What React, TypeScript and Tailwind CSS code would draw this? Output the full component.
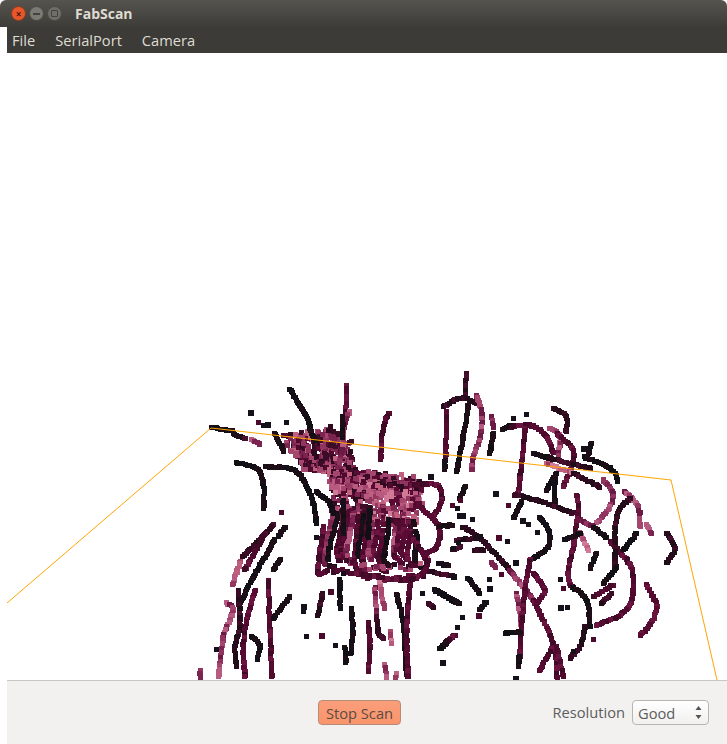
type Pt = [number, number];
type Strand = { c: string; p: number[]; j?: number; drop?: number };

// point cloud colours
const K = ['#14101a', '#1a1016', '#120f14', '#1f0d18'];
const D = ['#2e0a1f', '#3a0c26', '#240c1a', '#1f0d18', '#45102e'];
const M = ['#5a0b33', '#4d0a2c', '#6a1540', '#520c30', '#3f0a26'];
const P = ['#8f3560', '#a5466f', '#7c2450', '#b55a80', '#6a1a45'];
const L = ['#c0607f', '#a94a70', '#d07a98', '#94385f', '#b85a80'];
const X = ['#2e0a1f', '#5a0b33', '#7c2450', '#a5466f', '#4d0a2c', '#c0607f', '#3a0c26', '#8f3560'];
const Y = ['#7c2450', '#a5466f', '#c0607f', '#94385f', '#5a0b33', '#b85a80', '#d07a98'];
const palette: Record<string, string[]> = { k: K, d: D, m: M, p: P, l: L, x: X, y: Y };

// strands read off the left crop (x/3+190, y/3+370)
const left: Strand[] = [
  { c: 'k', p: [300, 58, 325, 100, 350, 140, 365, 190, 375, 210] },
  { c: 'm', p: [470, 48, 468, 100, 462, 150] },
  { c: 'p', p: [478, 125, 462, 170, 458, 225, 448, 275] },
  { c: 'k', p: [458, 140, 458, 200] },
  { c: 'm', p: [598, 130, 582, 160, 575, 210, 572, 268] },
  { c: 'k', p: [140, 278, 200, 295, 220, 340, 222, 415] },
  { c: 'k', p: [225, 292, 300, 295, 340, 330, 370, 400, 380, 460] },
  { c: 'k', p: [255, 190, 275, 230, 282, 245] },
  { c: 'k', p: [65, 173, 125, 182] },
  { c: 'd', p: [130, 190, 165, 208] },
  { c: 'p', p: [185, 210, 210, 222] },
  { c: 'd', p: [250, 465, 160, 560] },
  { c: 'k', p: [285, 470, 265, 500] },
  { c: 'm', p: [225, 490, 165, 600] },
  { c: 'l', p: [150, 575, 128, 645] },
  { c: 'k', p: [255, 510, 190, 620, 150, 700] },
  { c: 'k', p: [270, 570, 250, 600] },
  { c: 'm', p: [235, 630, 240, 780, 245, 920] },
  { c: 'k', p: [300, 680, 250, 745] },
  { c: 'm', p: [195, 660, 170, 750, 160, 830, 165, 920] },
  { c: 'p', p: [110, 700, 130, 720, 100, 800, 85, 920] },
  { c: 'd', p: [145, 660, 150, 760, 135, 830, 140, 890] },
  { c: 'k', p: [185, 800, 210, 825, 200, 870] },
  { c: 'p', p: [30, 900, 30, 925] },
  { c: 'd', p: [398, 670, 385, 735] },
  { c: 'k', p: [450, 630, 450, 715] },
  { c: 'k', p: [485, 715, 488, 790, 482, 850] },
  { c: 'k', p: [465, 830, 468, 880] },
  { c: 'm', p: [535, 755, 540, 830, 535, 905] },
  { c: 'p', p: [555, 650, 560, 730] },
  { c: 'd', p: [560, 740, 565, 790, 580, 805] },
  { c: 'l', p: [570, 640, 582, 715] },
  { c: 'l', p: [600, 785, 605, 820] },
  { c: 'k', p: [620, 675, 640, 760, 650, 920] },
  { c: 'm', p: [660, 640, 650, 780, 655, 920] },
  { c: 'k', p: [735, 660, 810, 700] },
  { c: 'd', p: [715, 700, 730, 712] },
  { c: 'm', p: [795, 795, 770, 820] },
  { c: 'k', p: [770, 820, 755, 835] },
  { c: 'p', p: [585, 885, 590, 925] },
  { c: 'l', p: [618, 910, 618, 925] },
  { c: 'm', p: [400, 470, 388, 560, 385, 610, 412, 602] },
  { c: 'k', p: [460, 390, 460, 490] },
  { c: 'k', p: [540, 420, 535, 500] },
  { c: 'k', p: [380, 365, 420, 400, 430, 430] },
  { c: 'm', p: [610, 450, 680, 520, 710, 590, 650, 630, 500, 610] },
  { c: 'm', p: [665, 345, 740, 345, 755, 390, 730, 440] },
  { c: 'm', p: [680, 400, 745, 470, 740, 530, 700, 555] },
  { c: 'k', p: [745, 580, 775, 585] },
  { c: 'd', p: [720, 605, 795, 620] },
];

// right crop (x/3+440, y/3+370)
const right: Strand[] = [
  { c: 'd', p: [78, 12, 75, 80] },
  { c: 'd', p: [10, 110, 40, 92, 70, 85, 110, 100] },
  { c: 'p', p: [110, 75, 125, 130, 120, 200, 100, 260, 95, 300] },
  { c: 'm', p: [20, 125, 18, 260] },
  { c: 'k', p: [15, 270, 15, 300] },
  { c: 'k', p: [85, 105, 70, 200, 50, 305] },
  { c: 'p', p: [155, 140, 160, 170] },
  { c: 'k', p: [160, 190, 150, 250] },
  { c: 'k', p: [190, 178, 215, 165] },
  { c: 'm', p: [215, 170, 270, 165, 320, 200, 340, 250] },
  { c: 'm', p: [255, 175, 245, 280, 235, 370] },
  { c: 'd', p: [340, 115, 380, 140, 378, 185] },
  { c: 'p', p: [330, 175, 360, 200, 355, 260] },
  { c: 'm', p: [350, 190, 400, 240, 395, 290, 370, 350] },
  { c: 'k', p: [280, 250, 330, 265] },
  { c: 'd', p: [330, 265, 450, 295] },
  { c: 'k', p: [435, 262, 510, 295, 535, 335] },
  { c: 'l', p: [320, 280, 400, 310] },
  { c: 'd', p: [400, 310, 480, 350] },
  { c: 'k', p: [350, 310, 320, 360] },
  { c: 'k', p: [345, 330, 345, 400] },
  { c: 'k', p: [455, 220, 445, 250] },
  { c: 'p', p: [490, 330, 520, 370, 510, 410, 470, 460] },
  { c: 'd', p: [225, 375, 290, 390, 400, 430] },
  { c: 'p', p: [420, 450, 460, 470] },
  { c: 'k', p: [460, 470, 500, 505] },
  { c: 'm', p: [510, 515, 560, 570, 578, 610, 575, 690, 540, 735, 470, 765] },
  { c: 'k', p: [245, 395, 220, 445] },
  { c: 'k', p: [300, 440, 325, 480, 325, 530, 280, 565] },
  { c: 'm', p: [412, 375, 415, 420, 405, 500, 385, 610, 395, 650] },
  { c: 'k', p: [395, 650, 440, 690, 450, 770] },
  { c: 'd', p: [435, 770, 420, 830, 390, 865] },
  { c: 'p', p: [555, 365, 595, 410, 600, 470] },
  { c: 'k', p: [590, 490, 550, 540] },
  { c: 'd', p: [570, 385, 530, 440, 525, 590] },
  { c: 'm', p: [620, 645, 650, 710, 630, 765, 600, 795] },
  { c: 'd', p: [680, 490, 705, 535, 680, 580] },
  { c: 'p', p: [620, 465, 635, 490] },
  { c: 'l', p: [420, 490, 445, 540] },
  { c: 'd', p: [70, 470, 130, 515, 210, 600] },
  { c: 'p', p: [210, 600, 280, 690] },
  { c: 'm', p: [280, 690, 340, 820, 350, 920] },
  { c: 'p', p: [230, 670, 245, 770] },
  { c: 'm', p: [270, 570, 250, 700, 240, 860] },
  { c: 'm', p: [280, 610, 315, 660, 290, 700] },
  { c: 'p', p: [155, 578, 165, 592] },
  { c: 'k', p: [0, 670, 55, 700] },
  { c: 'k', p: [85, 625, 120, 670] },
  { c: 'k', p: [138, 695, 120, 720] },
  { c: 'm', p: [45, 795, 20, 815] },
  { c: 'k', p: [20, 815, 0, 835] },
  { c: 'm', p: [340, 830, 300, 900] },
  { c: 'm', p: [350, 830, 370, 920] },
  { c: 'k', p: [195, 790, 240, 785] },
  { c: 'k', p: [238, 860, 235, 890] },
  { c: 'k', p: [530, 590, 490, 640] },
  { c: 'm', p: [520, 645, 460, 680] },
  { c: 'd', p: [515, 670, 485, 700] },
  { c: 'k', p: [470, 550, 450, 595] },
  { c: 'k', p: [375, 510, 420, 490] },
  { c: 'k', p: [60, 385, 75, 350] },
  { c: 'd', p: [50, 510, 110, 505] },
  { c: 'd', p: [40, 540, 60, 530] },
  { c: 'd', p: [105, 540, 130, 540] },
  { c: 'k', p: [0, 470, 38, 465] },
];

const leftDots: Pt[] = [
  [180, 125], [205, 155], [220, 165], [232, 162], [287, 157], [272, 427], [340, 708], [338, 722],
  [347, 797], [393, 795], [435, 825], [695, 670], [755, 875], [800, 770], [78, 838], [720, 318],
  [785, 405], [810, 390], [807, 435], [805, 515], [790, 535], [420, 662], [460, 608], [378, 502],
];
const rightDots: Pt[] = [
  [165, 368], [35, 405], [52, 415], [65, 435], [95, 447], [205, 405], [245, 450], [265, 462], [290, 485],
  [175, 500], [200, 513], [120, 498], [225, 577], [182, 612], [148, 628], [148, 655], [360, 628],
  [368, 655], [360, 710], [380, 710], [65, 740], [115, 735], [50, 770], [5, 875], [225, 925], [460, 808],
  [400, 842], [428, 233], [10, 585], [10, 612], [38, 618], [220, 145], [258, 132],
];

function rnd(seed: number) {
  const v = Math.sin(seed * 12.9898) * 43758.5453;
  return v - Math.floor(v);
}

// the dense fans in the middle of the scan
function fans(): Strand[] {
  const out: Strand[] = [];
  // upper brush, running from top left into the body
  for (let i = 0; i < 18; i++) {
    const x = 285 + i * 8;
    const y = 195 - i * 2 + rnd(i) * 30;
    out.push({ c: 'x', j: 3, drop: 0.3, p: [x, y, x + 50 + i, y + 70, 400 + i * 4, 290 + i * 3.5] });
  }
  // body, running along the top and curling down
  for (let i = 0; i < 17; i++) {
    const x = 425 + i * 16;
    const y = 320 + i * 1.5;
    const ex = 395 + i * 17 + rnd(i + 50) * 14;
    const ey = 540 + rnd(i + 70) * 60;
    out.push({ c: i > 7 ? 'y' : 'x', j: 2.5, drop: 0.2, p: [x, y, x + 8, y + 45, x + 6 - i, y + 110] });
    out.push({
      c: i % 5 === 1 ? 'k' : i % 4 === 0 ? 'p' : 'm',
      j: 0.7,
      drop: 0.08,
      p: [x + 6 - i, y + 110, (x + ex) / 2 + 2, 490, ex, ey, ex + 8 + rnd(i) * 12, ey + 22],
    });
  }
  // flat top of the body
  for (let i = 0; i < 7; i++) {
    out.push({ c: i > 3 ? 'y' : 'x', j: 3, drop: 0.3, p: [430, 298 + i * 10, 560, 310 + i * 11, 690, 328 + i * 13] });
  }
  // ring of ends along the bottom
  out.push({ c: 'm', j: 2.5, drop: 0.25, p: [430, 600, 520, 615, 620, 628, 700, 615] });
  out.push({ c: 'x', j: 3, drop: 0.45, p: [470, 575, 560, 590, 660, 590, 720, 570] });
  return out;
}

// Catmull-Rom through the control points, so strands curve as they do in the scan
function smooth(p: Pt[]): Pt[] {
  const res: Pt[] = [];
  for (let i = 0; i < p.length - 1; i++) {
    const a = p[Math.max(0, i - 1)];
    const b = p[i];
    const c = p[i + 1];
    const d = p[Math.min(p.length - 1, i + 2)];
    const n = Math.max(1, Math.ceil(Math.hypot(c[0] - b[0], c[1] - b[1]) / 2));
    for (let k = 0; k <= n; k++) {
      const t = k / n;
      const t2 = t * t;
      const t3 = t2 * t;
      const f = (q: number) =>
        0.5 *
        (2 * b[q] +
          (c[q] - a[q]) * t +
          (2 * a[q] - 5 * b[q] + 4 * c[q] - d[q]) * t2 +
          (3 * b[q] - a[q] - 3 * c[q] + d[q]) * t3);
      res.push([f(0), f(1)]);
    }
  }
  return res;
}

function toPts(raw: Strand[], ox: number, oy: number) {
  const rects: { x: number; y: number; s: number; f: string }[] = [];
  raw.forEach((st, si) => {
    const pal = palette[st.c];
    const ctrl: Pt[] = [];
    for (let i = 0; i + 1 < st.p.length; i += 2) ctrl.push([st.p[i] / 3 + ox, st.p[i + 1] / 3 + oy]);
    const j = st.j ?? 0.5;
    smooth(ctrl).forEach(([x, y], k) => {
      const seed = si * 97 + k * 3 + ox;
      if (rnd(seed + 7) < (st.drop ?? 0)) return;
      // colours hold for a few points, as the scan has them in small blocks
      const block = Math.floor(k / 2);
      rects.push({
        x: Math.round(x - 2.5 + (rnd(seed + 1) - 0.5) * 2 * j),
        y: Math.round(y - 2.5 + (rnd(seed + 2) - 0.5) * 2 * j),
        s: 5,
        f: pal[Math.floor(rnd(si * 31 + block + ox) * pal.length)],
      });
    });
  });
  return rects;
}

function dots(list: Pt[], ox: number, oy: number) {
  return list.map(([x, y], i) => ({
    x: Math.round(x / 3 + ox - 2),
    y: Math.round(y / 3 + oy - 2),
    s: i % 3 === 0 ? 6 : 5,
    f: i % 4 === 1 ? '#4a0a2c' : '#16101a',
  }));
}

const cloud = [
  ...toPts(fans(), 190, 370),
  ...toPts(left, 190, 370),
  ...toPts(right, 440, 370),
  ...dots(leftDots, 190, 370),
  ...dots(rightDots, 440, 370),
];

export default function App() {
  const font = { fontFamily: '"Open Sans", "Noto Sans", sans-serif' };

  return (
    <div className="w-[727px] h-[744px] flex flex-col bg-white overflow-hidden" style={font}>
      {/* Title bar */}
      <div className="h-[27px] shrink-0 flex items-center bg-gradient-to-b from-[#55544f] to-[#3d3c38] rounded-t-md">
        <div className="ml-[11px] size-[15px] rounded-full bg-[#e8572b] border border-[#8a3a1d] flex items-center justify-center text-[10px] font-bold leading-none text-[#4a1a08]">
          ×
        </div>
        <div className="ml-[3px] size-[15px] rounded-full bg-[#7b7a73] border border-[#4a4944] flex items-center justify-center">
          <div className="w-[7px] h-[2px] bg-[#44433f]" />
        </div>
        <div className="ml-[3px] size-[15px] rounded-full bg-[#6f6e67] border border-[#4a4944] flex items-center justify-center">
          <div className="size-[7px] border border-[#44433f] rounded-[1px]" />
        </div>
        <span className="ml-[13px] text-[14px] font-bold text-[#dfdbd2]">FabScan</span>
      </div>

      {/* Menu bar */}
      <div className="h-[26px] shrink-0 ml-[7px] bg-[#3c3b37] flex items-center gap-[20px] pl-[5px] text-[14.67px] text-[#dfdbd2]">
        <span>File</span>
        <span>SerialPort</span>
        <span>Camera</span>
      </div>

      {/* Scan view */}
      <div className="flex-1 ml-[7px] bg-white overflow-hidden">
        <svg viewBox="7 53 720 627" width={720} height={627} className="block">
          {cloud.map((r, i) => (
            <rect key={i} x={r.x} y={r.y} width={r.s} height={r.s} fill={r.f} />
          ))}
          <polyline points="7,603 211,428 671,480 717,680" fill="none" stroke="#ffa500" strokeWidth={1} />
        </svg>
      </div>

      {/* Controls */}
      <div className="h-[64px] shrink-0 ml-[7px] bg-[#f2f1f0] border-t border-[#c9c7c4] flex items-center text-[14.67px] text-[#5c5c5c]">
        <button className="ml-[311px] w-[83px] h-[25px] rounded-[4px] border border-[#b98a75] bg-gradient-to-b from-[#fa9e7a] to-[#f9956c] text-[#5c4a44] flex items-center justify-center">
          Stop Scan
        </button>
        <span className="ml-auto mr-[7px] -translate-y-px">Resolution</span>
        <div className="w-[77px] h-[25px] mr-[18px] rounded-[4px] border border-[#b8b6b3] bg-gradient-to-b from-white to-[#f1f0ef] flex items-center justify-between pl-[5px] pr-[6px]">
          <span>Good</span>
          <svg width={7} height={15} viewBox="0 0 7 15" className="text-[#55534f]">
            <path d="M3.5 1 L6.5 5 H0.5 Z M3.5 14 L0.5 10 H6.5 Z" fill="currentColor" />
          </svg>
        </div>
      </div>
    </div>
  );
}
